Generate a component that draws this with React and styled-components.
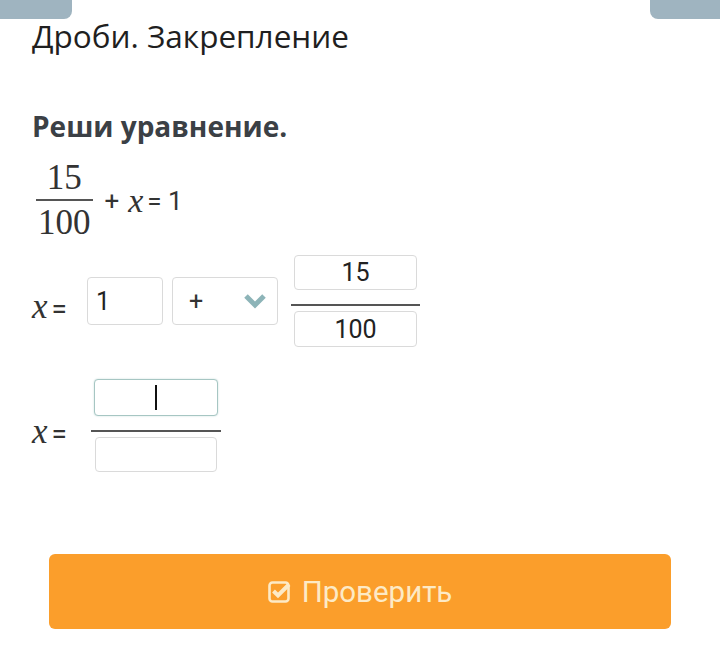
import React from 'react'
import styled, { createGlobalStyle } from 'styled-components'

const Global = createGlobalStyle`
  body {
    margin: 0;
    background: #fff;
    font-family: "Open Sans", "Noto Sans", sans-serif;
    color: #222;
  }
`

const Page = styled.div`
  width: 720px;
  height: 660px;
  overflow: hidden;
`

const TabBar = styled.div`
  display: flex;
  justify-content: space-between;
`

const Tab = styled.div`
  width: ${p => p.w}px;
  height: 19px;
  background: #9fb4c0;
  border-bottom-${p => p.side === 'left' ? 'right' : 'left'}-radius: 8px;
`

const Content = styled.div`
  padding: 0 0 0 32px;
`

const Title = styled.h1`
  margin: 0;
  font-weight: 400;
  font-size: 31.5px;
  line-height: 34px;
  color: #1f1f1f;
`

const Task = styled.h2`
  margin: 56px 0 0;
  font-weight: 700;
  font-size: 28px;
  line-height: 34px;
  color: #3b4045;
`

const MathRow = styled.div`
  display: flex;
  align-items: center;
  height: ${p => p.h}px;
  margin-top: ${p => p.top}px;
  font-family: "Roboto", sans-serif;
  font-size: 26px;
  color: #333;
`

const TexFrac = styled.div`
  display: flex;
  flex-direction: column;
  align-items: center;
  font-family: "Liberation Serif", serif;
  font-size: 35px;
  line-height: 38px;
  color: #333;
  margin-left: 4px;
  span { padding: 0 2px; }
  hr {
    width: 100%;
    margin: 2px 0 3px;
    border: none;
    border-top: 2px solid #555;
  }
`

const Var = styled.i`
  font-family: "Liberation Serif", serif;
  font-size: 34px;
  line-height: 26px;
  margin: 0 4px 0 9px;
`

const Op = styled.span`
  margin-left: ${p => p.ml || 0}px;
`

const Label = styled.div`
  display: flex;
  align-items: baseline;
  width: ${p => p.w}px;
  flex-shrink: 0;
  margin-top: ${p => p.dy || 0}px;
  font-size: 28px;
  i {
    font-family: "Liberation Serif", serif;
    font-size: 35px;
    margin-right: 4px;
  }
`

const Box = styled.div`
  box-sizing: border-box;
  width: ${p => p.w}px;
  height: ${p => p.h}px;
  border: 1px solid ${p => p.focus ? '#a6c6c3' : '#dadada'};
  box-shadow: ${p => p.focus ? '0 0 2px #c5dbd9' : 'none'};
  border-radius: 4px;
  background: #fff;
  display: flex;
  align-items: center;
  justify-content: ${p => p.center ? 'center' : 'flex-start'};
  padding: 0 ${p => p.pad || 0}px;
  font-family: "Roboto", sans-serif;
  font-size: ${p => p.fs || 25}px;
  color: #222;
`

const Select = styled(Box)`
  justify-content: space-between;
  margin-left: 9px;
  padding: 0 10px 0 16px;
  color: #333;
`

const Caret = styled.div`
  width: 2px;
  height: 25px;
  background: #111;
`

const Frac = styled.div`
  display: flex;
  flex-direction: column;
  align-items: center;
  margin-left: ${p => p.ml}px;
`

const Bar = styled.div`
  width: calc(100% + 6px);
  height: 2px;
  background: #555;
  margin: 14px 0 5px;
`

const Check = styled.button`
  display: flex;
  align-items: center;
  justify-content: center;
  gap: 10px;
  box-sizing: border-box;
  width: 622px;
  height: 75px;
  margin: 83px 0 0 17px;
  border: none;
  border-radius: 6px;
  background: #fb9e2b;
  color: #fdeac6;
  font-family: "Roboto", sans-serif;
  font-size: 29.5px;
`

const Chevron = () => (
  <svg width="24" height="16" viewBox="0 0 24 16">
    <polyline points="3,3 12,12 21,3" fill="none" stroke="#8db4b8" strokeWidth="5" strokeLinejoin="miter" />
  </svg>
)

const CheckIcon = () => (
  <svg width="24" height="24" viewBox="0 0 24 24">
    <rect x="1.5" y="2.5" width="19" height="19" rx="3" fill="none" stroke="#fdeac6" strokeWidth="2.6" />
    <polyline points="5.5,11 10,15.5 21,4.5" fill="none" stroke="#fdeac6" strokeWidth="4" />
  </svg>
)

export default function App() {
  return (
    <Page>
      <Global />
      <TabBar>
        <Tab w={72} side="left" />
        <Tab w={70} side="right" />
      </TabBar>
      <Content>
        <Title>Дроби. Закрепление</Title>
        <Task>Реши уравнение.</Task>
        <MathRow top={17} h={81}>
          <TexFrac>
            <span>15</span>
            <hr />
            <span>100</span>
          </TexFrac>
          <Op ml={12}>+</Op>
          <Var>x</Var>
          <Op>= 1</Op>
        </MathRow>
        <MathRow top={14} h={92}>
          <Label w={55} dy={12}><i>x</i>=</Label>
          <Box w={76} h={48} pad={8}>1</Box>
          <Select w={106} h={48}>+<Chevron /></Select>
          <Frac ml={16}>
            <Box w={123} h={35} center>15</Box>
            <Bar />
            <Box w={123} h={36} center>100</Box>
          </Frac>
        </MathRow>
        <MathRow top={32} h={92}>
          <Label w={62} dy={14}><i>x</i>=</Label>
          <Frac ml={0}>
            <Box w={124} h={37} center focus><Caret /></Box>
            <Bar />
            <Box w={122} h={35} center />
          </Frac>
        </MathRow>
        <Check>
          <CheckIcon />
          Проверить
        </Check>
      </Content>
    </Page>
  )
}
